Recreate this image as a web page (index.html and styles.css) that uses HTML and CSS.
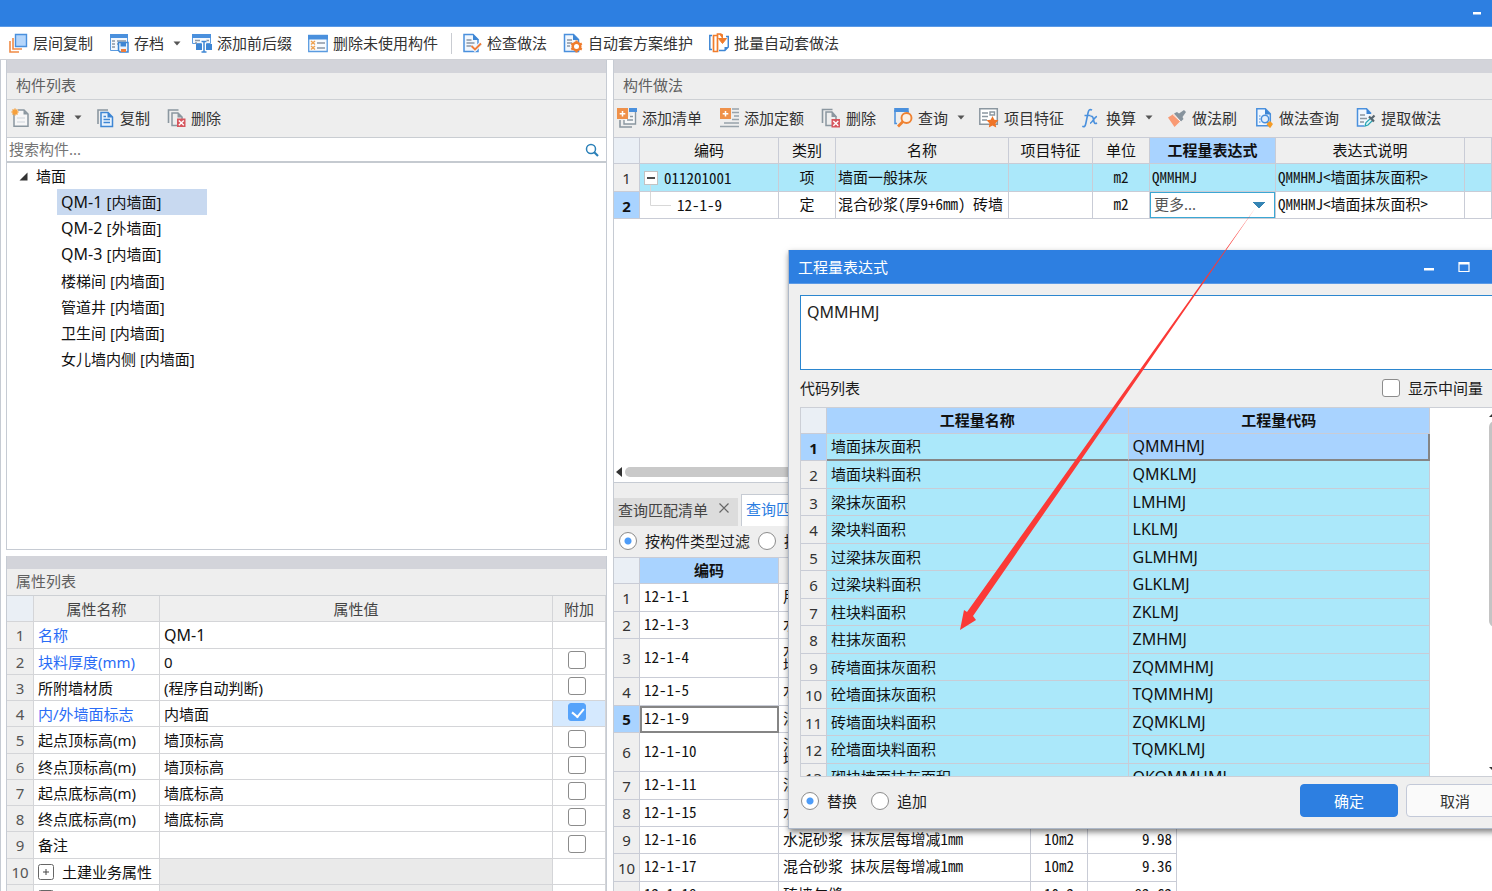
FILE: index.html
```html
<!DOCTYPE html>
<html lang="zh-CN">
<head>
<meta charset="utf-8">
<title>构件做法</title>
<link rel="stylesheet" href="styles.css">
</head>
<body>
<div class="app">
  <header class="titlebar">
    <button class="win-btn" aria-label="最小化"><svg width="10" height="10" viewBox="0 0 10 10"><path d="M1 4h8v2.500H1z" fill="#fff"/></svg></button>
  </header>

  <nav class="toolbar main-toolbar">
    <button class="tool"><svg class="icon" viewBox="0 0 20 20"><path d="M2 8v11h9M5 5v11h9" fill="none" stroke="#ef8a45" stroke-width="1.600"/><path d="M7.500 1.500h11v12h-11z" fill="#b5d6fb" stroke="#4a90dd" stroke-width="1.400"/></svg>层间复制</button>
    <button class="tool has-menu"><svg class="icon" viewBox="0 0 20 20"><path d="M1.500 1.500h17v16h-17z" fill="#f4f8fd" stroke="#5a9be0"/><path d="M1 1h18v4H1z" fill="#4a90dd"/><path d="M3 8h3M3 11h3M3 14h3M8 8h9M8 11h2" stroke="#8b97a5" stroke-width="1.400"/><path d="M9.500 9.500h9.500v9.500H11l-1.500-1.500z" fill="#eaf3fd" stroke="#3e86d4" stroke-width="1.500"/><path d="M11.500 10h5.500v3.500h-5.500z" fill="#3e86d4"/><path d="M12 16h5v3h-5z" fill="#ef7d3a"/></svg>存档<svg class="caret" viewBox="0 0 8 5"><path d="M0.500 0.500h7L4 4.500z"/></svg></button>
    <button class="tool"><svg class="icon" viewBox="0 0 20 20"><path d="M.500 1.500h18v9h-18z" fill="#f4f8fd" stroke="#5a9be0"/><path d="M0 1h19v4H0z" fill="#4a90dd"/><path d="M3 7.500h5M3 10h2M14 7.500h3" stroke="#8b97a5" stroke-width="1.400"/><path d="M9.500 8.500h5M12 8v11M9.500 19h5" stroke="#fff" stroke-width="4"/><path d="M4 11h6v6H4zM14 11h6v6h-6z" fill="#3e86d4"/><path d="M9.500 8.500h5M12 8v11M9.500 19h5" stroke="#3e86d4" stroke-width="1.500"/></svg>添加前后缀</button>
    <button class="tool"><svg class="icon" viewBox="0 0 20 20"><path d="M.700 2.500h18.500v16H.700z" fill="#f8fbff" stroke="#5a9be0" stroke-width="1.300"/><path d="M0 2h20v4.500H0z" fill="#4a90dd"/><path d="M3 8l4 3.500M7 8l-4 3.500M3 13l4 3.500M7 13l-4 3.500" stroke="#efa04d" stroke-width="1.400"/><path d="M9 10h8M9 15h8" stroke="#8b97a5" stroke-width="1.600"/></svg>删除未使用构件</button>
    <span class="divider"></span>
    <button class="tool"><svg class="icon" viewBox="0 0 20 20"><path d="M2 1.500h9l5 5v12H2z" fill="#f1f7fe" stroke="#4a90dd" stroke-width="1.500"/><path d="M11 1v6h6z" fill="#3e86d4"/><path d="M4.500 7h5M4.500 10h8M4.500 13h5" stroke="#8b97a5" stroke-width="1.400"/><path d="M9.500 13l3.500 3.500 6-6" fill="none" stroke="#f1f7fe" stroke-width="4"/><path d="M9.500 13l3.500 3.500 6-6" fill="none" stroke="#ef7d3a" stroke-width="1.900"/></svg>检查做法</button>
    <button class="tool"><svg class="icon" viewBox="0 0 20 20"><path d="M1.500 1.500h9l5 5v12h-14z" fill="#f1f7fe" stroke="#4a90dd" stroke-width="1.500"/><path d="M10 1v6h6z" fill="#3e86d4"/><path d="M4 7h5M4 10h5M4 13h3" stroke="#8b97a5" stroke-width="1.400"/><circle cx="13.500" cy="13.500" r="3.800" fill="#fff" stroke="#f07c2c" stroke-width="2.600"/><path d="M13.500 7.500v2.500M13.500 17v2.500M8.300 10.500l2.200 1.200M16.600 15.300l2.200 1.200M8.300 16.500l2.200-1.200M16.600 11.700l2.200-1.200" stroke="#f07c2c" stroke-width="2.200"/></svg>自动套方案维护</button>
    <button class="tool"><svg class="icon" viewBox="0 0 20 20"><path d="M3 2.500H.800v14H3M17 3.500h2.300V14l-3.500 3.500H10" fill="none" stroke="#3e86d4" stroke-width="1.500"/><path d="M15.500 18v-4h4z" fill="#3e86d4"/><path d="M4.500 2.500h4v16h-4zM8.500 3V1h4" fill="none" stroke="#f07c2c" stroke-width="1.700"/><path d="M10.500 1.500h3v4.500M9.500 5.500h8l-4 5z" fill="#f07c2c" stroke="#f07c2c"/></svg>批量自动套做法</button>
  </nav>

  <main class="workspace">
    <div class="left-column">
      <section class="panel components">
        <h2 class="panel-title">构件列表</h2>
        <div class="toolbar panel-toolbar">
          <button class="tool has-menu"><svg class="icon" viewBox="0 0 20 20"><path d="M4 4v14.200h14V6l-4-4H8" fill="#f7f7f8" stroke="#8b97a0" stroke-width="1.500"/><path d="M13.500 2v4.500H18z" fill="#8b97a0"/><path d="M7 10h8M7 14h8" stroke="#dcdfe3" stroke-width="1.300"/><path d="M5 .500v7M1.500 4h7M2.500 1.500l5 5M7.500 1.500l-5 5" stroke="#f6a03b" stroke-width="1.500"/></svg>新建<svg class="caret" viewBox="0 0 8 5"><path d="M0.500 0.500h7L4 4.500z"/></svg></button>
          <button class="tool"><svg class="icon" viewBox="0 0 20 20"><path d="M3 16V2h10" fill="none" stroke="#8b97a0" stroke-width="1.600"/><path d="M6 4.500h7l4.500 4.500v9.500H6z" fill="#e8f2fd" stroke="#3e86d4" stroke-width="1.500"/><path d="M12.500 4v5.500H18z" fill="#3e86d4"/><path d="M8.500 8.500H11M8.500 11.500H15M8.500 14.500H15" stroke="#3e86d4" stroke-width="1.300"/></svg>复制</button>
          <button class="tool"><svg class="icon" viewBox="0 0 20 20"><path d="M2.500 15V2h10" fill="none" stroke="#8b97a0" stroke-width="1.600"/><path d="M11 17.500H6V5h6l4 4v2" fill="none" stroke="#8b97a0" stroke-width="1.500"/><path d="M11.500 4.500v5H17z" fill="#8b97a0"/><path d="M11 10.500h8.500V19H11z" fill="#d6555d"/><path d="M12.800 12.500l5 4.800M17.800 12.500l-5 4.800" stroke="#fff" stroke-width="1.400"/></svg>删除</button>
        </div>
        <div class="search">
          <input type="text" placeholder="搜索构件..." aria-label="搜索构件">
          <svg class="search-icon" viewBox="0 0 14 14"><circle cx="6" cy="6" r="4.500" fill="none" stroke="#2b80b8" stroke-width="1.500"/><path d="M9 9l4 4" stroke="#2b80b8" stroke-width="2.200"/></svg>
        </div>
        <ul class="tree">
          <li class="root"><svg class="expander" viewBox="0 0 9 9"><path d="M8.500 .500v8h-8z" fill="#333"/></svg>墙面</li>
          <li><span class="node selected"><span class="latin">QM-1 </span>[内墙面]</span></li>
          <li><span class="node"><span class="latin">QM-2 </span>[外墙面]</span></li>
          <li><span class="node"><span class="latin">QM-3 </span>[内墙面]</span></li>
          <li><span class="node">楼梯间 [内墙面]</span></li>
          <li><span class="node">管道井 [内墙面]</span></li>
          <li><span class="node">卫生间 [内墙面]</span></li>
          <li><span class="node">女儿墙内侧 [内墙面]</span></li>
        </ul>
      </section>

      <section class="panel properties">
        <h2 class="panel-title">属性列表</h2>
        <table class="grid prop-grid">
          <colgroup><col class="w-num"><col class="w-prop"><col><col class="w-extra"></colgroup>
          <thead><tr><th class="corner"></th><th>属性名称</th><th>属性值</th><th>附加</th></tr></thead>
          <tbody>
            <tr><th>1</th><td class="link">名称</td><td><span class="latin">QM-1</span></td><td></td></tr>
            <tr><th>2</th><td class="link">块料厚度(mm)</td><td>0</td><td class="tick"><input type="checkbox" aria-label="块料厚度附加"></td></tr>
            <tr><th>3</th><td>所附墙材质</td><td>(程序自动判断)</td><td class="tick"><input type="checkbox" aria-label="所附墙材质附加"></td></tr>
            <tr><th>4</th><td class="link">内/外墙面标志</td><td>内墙面</td><td class="tick active"><input type="checkbox" checked aria-label="内外墙面标志附加"></td></tr>
            <tr><th>5</th><td>起点顶标高(m)</td><td>墙顶标高</td><td class="tick"><input type="checkbox" aria-label="起点顶标高附加"></td></tr>
            <tr><th>6</th><td>终点顶标高(m)</td><td>墙顶标高</td><td class="tick"><input type="checkbox" aria-label="终点顶标高附加"></td></tr>
            <tr><th>7</th><td>起点底标高(m)</td><td>墙底标高</td><td class="tick"><input type="checkbox" aria-label="起点底标高附加"></td></tr>
            <tr><th>8</th><td>终点底标高(m)</td><td>墙底标高</td><td class="tick"><input type="checkbox" aria-label="终点底标高附加"></td></tr>
            <tr><th>9</th><td>备注</td><td></td><td class="tick"><input type="checkbox" aria-label="备注附加"></td></tr>
            <tr><th>10</th><td class="group"><svg class="plus" viewBox="0 0 16 16"><rect x=".500" y=".500" width="15" height="15" rx="2" fill="#fff" stroke="#666"/><path d="M5 8h6M8 5v6" stroke="#444"/></svg>土建业务属性</td><td class="shade"></td><td></td></tr>
            <tr><th></th><td class="group"><svg class="plus" viewBox="0 0 16 16"><rect x=".500" y=".500" width="15" height="15" rx="2" fill="#fff" stroke="#666"/><path d="M5 8h6M8 5v6" stroke="#444"/></svg></td><td class="shade"></td><td></td></tr>
          </tbody>
        </table>
      </section>
    </div>

    <div class="right-column">
      <section class="panel methods">
        <h2 class="panel-title">构件做法</h2>
        <div class="toolbar panel-toolbar right-tools">
          <button class="tool"><svg class="icon" viewBox="0 0 20 20"><path d="M12 0h8v4h-8z" fill="#4a90dd"/><path d="M18.500 4v12H7v-4" fill="#f7f8f9" stroke="#8b97a0" stroke-width="1.400"/><path d="M3 12v7h12M10 12h6M13 8.500h3" fill="none" stroke="#8b97a0" stroke-width="1.600"/><path d="M0 0h11v11H0z" fill="#ef914a"/><path d="M5.500 3v5.500M2.700 5.700h5.600" stroke="#fff" stroke-width="1.500"/></svg>添加清单</button>
          <button class="tool"><svg class="icon" viewBox="0 0 20 20"><path d="M13 1h7M13 4.500h7M15 8h5M13 11.500h7M5 15h15M1 18.500h19" stroke="#98a2aa" stroke-width="1.700"/><path d="M1 0h11v11H1z" fill="#ef914a"/><path d="M6.500 3v5.500M3.700 5.700h5.600" stroke="#fff" stroke-width="1.500"/></svg>添加定额</button>
          <button class="tool"><svg class="icon" viewBox="0 0 20 20"><path d="M1.500 15V1.500h10" fill="none" stroke="#8b97a0" stroke-width="1.600"/><path d="M11 17.500H5V4h6l4 4.500v3" fill="none" stroke="#8b97a0" stroke-width="1.500"/><path d="M10.500 3.500V9H16z" fill="#8b97a0"/><path d="M10.500 11h8.500v8.500h-8.500z" fill="#d6555d"/><path d="M12.300 13l5 4.800M17.300 13l-5 4.800" stroke="#fff" stroke-width="1.400"/></svg>删除</button>
          <button class="tool has-menu"><svg class="icon" viewBox="0 0 20 20"><path d="M2 2v13.500h2M15 3v2" fill="none" stroke="#4a90dd" stroke-width="1.500"/><path d="M1.200 0h14.500v4H1.200z" fill="#4a90dd"/><circle cx="13.500" cy="10" r="5" fill="#fdf0e4" stroke="#ef8232" stroke-width="1.900"/><path d="M10 13.500l-5 5" stroke="#ef8232" stroke-width="2.800"/></svg>查询<svg class="caret" viewBox="0 0 8 5"><path d="M0.500 0.500h7L4 4.500z"/></svg></button>
          <button class="tool"><svg class="icon" viewBox="0 0 20 20"><path d="M.800.800h17.500v15.500H.800z" fill="#fff" stroke="#8b97a0" stroke-width="1.500"/><path d="M3 5h6M3 8.500h6M3 12h5M11 4h4.500v3H11z" fill="none" stroke="#8b97a0" stroke-width="1.400"/><path d="M13.500 8l1.800 3.700 4.200.6-3 2.900.7 4.300-3.700-2-3.700 2 .7-4.300-3-2.900 4.200-.6z" fill="#ef7428"/></svg>项目特征</button>
          <button class="tool has-menu"><svg class="icon" viewBox="0 0 20 20"><path d="M11 2.200C8.500.500 7.500 2.500 7 5L4.800 15.500C4.300 18.300 3.200 19.300 1.300 18.300M3.500 7.500h6M9.500 8.500c2.500-1 2.800 2 3.200 4 .5 2.500 1 3.800 3.300 2.500M16 8.500c-2.500.300-5 6.700-7 6.700" fill="none" stroke="#4a90dd" stroke-width="1.600"/></svg>换算<svg class="caret" viewBox="0 0 8 5"><path d="M0.500 0.500h7L4 4.500z"/></svg></button>
          <button class="tool"><svg class="icon" viewBox="0 0 20 20"><path d="M1 9.500l5.500-3.500 7 7L7.500 19z" fill="#f99a74"/><path d="M7 5.500l3-1.500 2 1.500L17 2l2 2-3.500 5 1 2-2.500 2.500z" fill="#87939d"/><path d="M6 6.500l7.500 7" stroke="#fff" stroke-width="1"/></svg>做法刷</button>
          <button class="tool"><svg class="icon" viewBox="0 0 20 20"><path d="M2.800.800h8.500l5 5v12H2.800z" fill="#f1f7fe" stroke="#4a90dd" stroke-width="1.500"/><path d="M11 .500v6h6z" fill="#3e86d4"/><path d="M5 8h1.500M5 11h1.500M5 14h1.500" stroke="#4a90dd"/><circle cx="11" cy="11" r="3.700" fill="#e4effc" stroke="#4a90dd" stroke-width="1.500"/><path d="M13 13.500l2 2" stroke="#4a90dd" stroke-width="1.500"/><path d="M13.500 16l2.500-2 2 2-2 3z" fill="#f59b25" stroke="#f59b25" stroke-width="1.500"/></svg>做法查询</button>
          <button class="tool"><svg class="icon" viewBox="0 0 20 20"><path d="M8 18H1.500V.800h9L15 5.500" fill="#f1f7fe" stroke="#4a90dd" stroke-width="1.500"/><path d="M10.500.500v5.500h5z" fill="#3e86d4"/><path d="M4 7h5M4 10.500h7M4 14h4" stroke="#8b97a0" stroke-width="1.400"/><path d="M9 18l1-3.500 5-4.500 2 2-5 5z" fill="#dff6f8" stroke="#27a4b3" stroke-width="1.200"/><path d="M13 8.500l5 5M15.500 10.500l3-3" stroke="#58656f" stroke-width="2.200"/></svg>提取做法</button>
        </div>
        <div class="method-body">
          <table class="grid method-grid">
            <colgroup><col class="w-rownum"><col class="w-code"><col class="w-kind"><col class="w-name"><col class="w-feature"><col class="w-unit"><col class="w-expr"><col class="w-note"><col></colgroup>
            <thead><tr><th class="corner"></th><th>编码</th><th>类别</th><th>名称</th><th>项目特征</th><th>单位</th><th class="current">工程量表达式</th><th>表达式说明</th><th></th></tr></thead>
            <tbody>
              <tr class="cyan"><th>1</th><td class="outline"><svg class="branch" viewBox="0 0 32 27"><rect x="4.500" y="7.500" width="13" height="13" fill="#fff" stroke="#c3c3c3"/><path d="M7 14h8" stroke="#111" stroke-width="1.500"/><path d="M10.500 21v6" stroke="#d8d8d8"/></svg><span class="parent">011201001</span></td><td class="mid">项</td><td>墙面一般抹灰</td><td></td><td class="mid">m2</td><td>QMMHMJ</td><td>QMMHMJ&lt;墙面抹灰面积&gt;</td><td></td></tr>
              <tr><th class="current">2</th><td class="outline"><svg class="branch" viewBox="0 0 32 27"><path d="M10.500 0v13.500H31" fill="none" stroke="#d8d8d8"/></svg><span class="child">12-1-9</span></td><td class="mid">定</td><td>混合砂浆(厚9+6mm) 砖墙</td><td></td><td class="mid">m2</td><td class="editor"><select aria-label="工程量表达式"><option>更多...</option></select></td><td>QMMHMJ&lt;墙面抹灰面积&gt;</td><td></td></tr>
            </tbody>
          </table>
          <div class="hscroll"><svg class="hscroll-arrow" viewBox="0 0 6 10"><path d="M6 0v10L0 5z" fill="#333"/></svg><span class="hscroll-thumb"></span></div>
        </div>
      </section>

      <section class="panel queries">
        <div class="tabs">
          <button class="tab">查询匹配清单<svg class="close" viewBox="0 0 10 10"><path d="M0.500.500l9 9M9.500.500l-9 9" stroke="#666" stroke-width="1.200"/></svg></button>
          <button class="tab open">查询匹配定额</button>
        </div>
        <div class="filters">
          <label><input type="radio" name="filter" checked>按构件类型过滤</label>
          <label><input type="radio" name="filter">按构件属性过滤</label>
        </div>
        <div class="match-body">
          <table class="grid match-grid">
            <colgroup><col class="w-rownum"><col class="w-code"><col class="w-match"><col class="w-unit"><col class="w-price"></colgroup>
            <thead><tr><th class="corner"></th><th class="current">编码</th><th></th><th></th><th></th></tr></thead>
            <tbody>
              <tr><th>1</th><td>12-1-1</td><td>用</td><td></td><td></td></tr>
              <tr><th>2</th><td>12-1-3</td><td>水</td><td></td><td></td></tr>
              <tr class="tall"><th>3</th><td>12-1-4</td><td>水<br>墙</td><td></td><td></td></tr>
              <tr><th>4</th><td>12-1-5</td><td>水</td><td></td><td></td></tr>
              <tr><th class="current">5</th><td class="focus">12-1-9</td><td>混</td><td></td><td></td></tr>
              <tr class="tall"><th>6</th><td>12-1-10</td><td>混<br>墙</td><td></td><td></td></tr>
              <tr><th>7</th><td>12-1-11</td><td>混</td><td></td><td></td></tr>
              <tr><th>8</th><td>12-1-15</td><td>水</td><td></td><td></td></tr>
              <tr><th>9</th><td>12-1-16</td><td>水泥砂浆 抹灰层每增减1mm</td><td class="mid">10m2</td><td class="num">9.98</td></tr>
              <tr><th>10</th><td>12-1-17</td><td>混合砂浆 抹灰层每增减1mm</td><td class="mid">10m2</td><td class="num">9.36</td></tr>
              <tr><th>11</th><td>12-1-18</td><td>砖墙勾缝</td><td class="mid">10m2</td><td class="num">82.62</td></tr>
            </tbody>
          </table>
        </div>
      </section>
    </div>
  </main>

  <section class="dialog" role="dialog" aria-labelledby="dialog-title">
    <header class="dialog-head">
      <h2 id="dialog-title">工程量表达式</h2>
      <button class="win-btn" aria-label="最小化"><svg width="12" height="12" viewBox="0 0 12 12"><path d="M1 7h10v2.500H1z" fill="#fff"/></svg></button>
      <button class="win-btn" aria-label="最大化"><svg width="12" height="12" viewBox="0 0 12 12"><path d="M1 1.500h10v9H1z" fill="none" stroke="#fff" stroke-width="1.200"/><path d="M1 1h10v2.500H1z" fill="#fff"/></svg></button>
      <button class="win-btn" aria-label="关闭"><svg width="12" height="12" viewBox="0 0 12 12"><path d="M1 1l10 10M11 1L1 11" stroke="#fff" stroke-width="1.500"/></svg></button>
    </header>
    <div class="dialog-body">
      <textarea class="expression" aria-label="表达式">QMMHMJ</textarea>
      <div class="list-head">
        <span>代码列表</span>
        <label><input type="checkbox">显示中间量</label>
      </div>
      <div class="code-list">
        <div class="code-scroll">
          <table class="grid code-grid">
            <colgroup><col class="w-rownum"><col class="w-quantity"><col class="w-quantity"></colgroup>
            <thead><tr><th class="corner"></th><th class="current">工程量名称</th><th class="current">工程量代码</th></tr></thead>
            <tbody>
              <tr class="picked"><th class="current">1</th><td>墙面抹灰面积</td><td>QMMHMJ</td></tr>
              <tr><th>2</th><td>墙面块料面积</td><td>QMKLMJ</td></tr>
              <tr><th>3</th><td>梁抹灰面积</td><td>LMHMJ</td></tr>
              <tr><th>4</th><td>梁块料面积</td><td>LKLMJ</td></tr>
              <tr><th>5</th><td>过梁抹灰面积</td><td>GLMHMJ</td></tr>
              <tr><th>6</th><td>过梁块料面积</td><td>GLKLMJ</td></tr>
              <tr><th>7</th><td>柱块料面积</td><td>ZKLMJ</td></tr>
              <tr><th>8</th><td>柱抹灰面积</td><td>ZMHMJ</td></tr>
              <tr><th>9</th><td>砖墙面抹灰面积</td><td>ZQMMHMJ</td></tr>
              <tr><th>10</th><td>砼墙面抹灰面积</td><td>TQMMHMJ</td></tr>
              <tr><th>11</th><td>砖墙面块料面积</td><td>ZQMKLMJ</td></tr>
              <tr><th>12</th><td>砼墙面块料面积</td><td>TQMKLMJ</td></tr>
              <tr><th>13</th><td>砌块墙面抹灰面积</td><td>QKQMMHMJ</td></tr>
            </tbody>
          </table>
        </div>
        <div class="vscroll">
          <svg viewBox="0 0 12 6"><path d="M6 0l6 6H0z"/></svg>
          <span class="vthumb"></span>
          <svg viewBox="0 0 12 6"><path d="M0 0h12L6 6z"/></svg>
        </div>
      </div>
      <footer class="dialog-foot">
        <label><input type="radio" name="mode" checked>替换</label>
        <label><input type="radio" name="mode">追加</label>
        <button class="btn primary">确定</button>
        <button class="btn">取消</button>
      </footer>
    </div>
  </section>

  <svg class="pointer" width="300" height="428" viewBox="958 205 300 428" aria-hidden="true"><path d="M1256 207L973 616l3 4-16 10 4-20 3 2z" fill="#fb3a37"/></svg>
</div>
</body>
</html>
```

FILE: styles.css
```css
* { box-sizing: border-box; }

body {
  margin: 0;
  font: 15px/20px "Noto Sans", "Noto Sans CJK SC", sans-serif;
  color: #1c1c1c;
}

button, input, select, textarea { font: inherit; color: inherit; margin: 0; }
button { border: 0; background: none; padding: 0; }
h2 { margin: 0; font-size: 15px; font-weight: 400; }
label { display: flex; align-items: center; gap: 8px; }

.app {
  position: relative;
  display: flex;
  flex-direction: column;
  height: 100vh;
  overflow: hidden;
  background: #fff;
}

/* window chrome */
.titlebar {
  display: flex;
  flex: none;
  justify-content: flex-end;
  align-items: center;
  height: 27px;
  padding-right: 10px;
  background: #2d7fe1;
  border-bottom: 1px solid #5b9ae6;
}
.win-btn { display: flex; }

.toolbar { display: flex; align-items: center; gap: 10px; color: #333; }
.main-toolbar {
  flex: none;
  height: 33px;
  padding-left: 8px;
  border-bottom: 1px solid #cfd1d6;
}
.tool {
  display: flex;
  align-items: center;
  gap: 5px;
  padding-right: 6px;
  white-space: nowrap;
}
.tool.has-menu { padding-right: 1px; }
.panel-toolbar .has-menu { padding-right: 3px; }
.icon { width: 20px; height: 20px; }
.caret { width: 8px; height: 5px; margin-left: 4px; fill: #555; }
.divider { width: 1px; height: 21px; margin-left: -3px; background: #c9ccd2; }

/* docking area */
.workspace {
  display: flex;
  flex: 1;
  min-height: 0;
  gap: 6px;
  padding-left: 5px;
  border-left: 1px solid #c6cbd3;
}
.left-column {
  display: flex;
  flex: 0 0 601px;
  flex-direction: column;
  gap: 6px;
}
.right-column {
  display: flex;
  flex: 1;
  flex-direction: column;
  min-width: 0;
  background: #eee;
}
.panel {
  display: flex;
  flex-direction: column;
  min-height: 0;
  border: 1px solid #c6cbd3;
  border-top: 0;
}
.panel-title {
  flex: none;
  height: 40px;
  padding: 2px 0 0 9px;
  color: #606060;
  background: #eee;
  border-top: 13px solid #d3d4da;
  border-bottom: 1px solid #cdd0d4;
}
.panel-toolbar {
  flex: none;
  height: 37px;
  padding: 0 0 2px 3px;
  background: #eee;
}
.components { flex: 490; background: #fff; }
.properties { flex: 335; background: #fff; border-bottom: 0; }

.search {
  display: flex;
  flex: none;
  align-items: center;
  height: 26px;
  padding-right: 7px;
  border-top: 1px solid #c9cdd2;
  border-bottom: 2px solid #c5cad0;
}
.search input {
  flex: 1;
  height: 22px;
  padding: 0 2px 2px;
  border: 0;
  outline: 0;
}
.search input::placeholder { color: #757575; }
.search-icon { width: 14px; height: 14px; }

.tree { margin: 0; padding: 0; list-style: none; color: #111; }
.tree li { height: 26px; padding-left: 50px; }
.tree li:nth-child(4n) { height: 27px; }
.tree .root { display: flex; align-items: center; gap: 8px; padding-left: 12px; }
.expander { width: 9px; height: 9px; }
.node { display: inline-block; height: 26px; padding: 3px 4px; }
.node.selected { width: 150px; background: #c8d9f0; }
.latin { font-size: 16px; }

/* data grids */
.grid {
  width: 100%;
  table-layout: fixed;
  border-collapse: separate;
  border-spacing: 0;
  color: #111;
}
.grid th, .grid td {
  padding: 0 0 0 3px;
  overflow: hidden;
  white-space: nowrap;
  text-align: left;
  border-right: 1px solid #c9ccd6;
  border-bottom: 1px solid #c9ccd6;
}
.grid th {
  padding: 0 0 1px;
  font-weight: 400;
  text-align: center;
  background: #efefef;
}
.grid tbody th { padding: 1px 0 0; color: #333; }
.grid .corner { background: #eaeff5; }
.grid th.current { font-weight: 700; color: #111; background: #a9d3ff; }
.grid .mid { text-align: center; padding-left: 0; }
.grid .num { text-align: right; padding-right: 4px; }

.w-num { width: 27px; }
.w-prop { width: 126px; }
.w-extra { width: 53px; }
.w-rownum { width: 26px; }
.w-code { width: 139px; }
.w-kind { width: 57px; }
.w-name { width: 173px; }
.w-feature { width: 84px; }
.w-unit { width: 57px; }
.w-expr { width: 126px; }
.w-note { width: 189px; }
.w-match { width: 252px; }
.w-price { width: 89px; }
.w-quantity { width: 301px; }

.prop-grid th, .prop-grid td { height: 26px; border-color: #d4d5d8; }
.prop-grid thead th { color: #444; padding-top: 2px; }
.prop-grid tbody th { padding: 0; color: #555; }
.prop-grid tbody tr:nth-child(4n+1) td { height: 27px; }
.prop-grid td { padding-left: 4px; }
.prop-grid .link { color: #2a6cf6; }
.prop-grid .tick { padding: 0 4px 3px 0; text-align: center; }
.prop-grid .active { background: #d5e9fe; }
.prop-grid .shade { background: #eaeaea; }
.plus { width: 16px; height: 16px; margin-right: 8px; vertical-align: -2px; }

.method-grid td, .match-grid td {
  padding-bottom: 2px;
  font-family: "Noto Sans CJK SC", sans-serif;
  font-feature-settings: "hwid";
}
.methods { flex: 422; background: #fff; border-right: 0; }
.right-tools { gap: 11px; }
.method-body {
  display: flex;
  flex: 1;
  flex-direction: column;
  justify-content: space-between;
  border-top: 1px solid #c9ccd6;
}
.method-grid th { height: 26px; }
.method-grid td { height: 27px; padding-left: 2px; }
.method-grid .cyan td { height: 28px; background: #abe8fa; }
.branch { width: 32px; height: 27px; }
.method-grid .outline { padding: 0; line-height: 16px; }
.method-grid .outline svg { margin: -1px 0; }
.outline svg, .outline span { vertical-align: middle; }
.outline .parent { margin-left: -8px; }
.outline .child { margin-left: 5px; }
.method-grid .editor { padding: 0; }
.editor select {
  display: block;
  width: 100%;
  height: 26px;
  padding: 0 3px 2px;
  font-family: "Noto Sans", "Noto Sans CJK SC", sans-serif;
  color: #555;
  border: 1px solid #3ba7d4;
  border-radius: 0;
  appearance: none;
  background: linear-gradient(to bottom right, #3584b4 50%, transparent 51%) right 9px center / 6px 6px no-repeat,
    linear-gradient(to bottom left, #3584b4 50%, transparent 51%) right 15px center / 6px 6px no-repeat, #fff;
}

.hscroll { display: flex; align-items: center; gap: 3px; height: 19px; padding-left: 2px; }
.hscroll-arrow { width: 6px; height: 10px; }
.hscroll-thumb { flex: 1; height: 10px; border-radius: 5px; background: #c9c9c9; }

.queries { flex: 409; border-right: 0; border-bottom: 0; }
.tabs { display: flex; flex: none; align-items: flex-end; gap: 3px; height: 43px; }
.tab {
  display: flex;
  gap: 11px;
  height: 28px;
  padding: 2px 9px 0 4px;
  color: #444;
  background: #dcdcdc;
}
.tab.open {
  height: 32px;
  padding-top: 4px;
  color: #2a7de1;
  background: #fff;
  border: 1px solid #c6cbd3;
  border-bottom: 0;
}
.close { width: 10px; height: 10px; margin-top: 3px; }
.filters {
  display: flex;
  flex: none;
  align-items: center;
  gap: 8px;
  height: 31px;
  padding-left: 5px;
}
.match-body { flex: 1; overflow: hidden; background: #fff; border-top: 1px solid #c9ccd6; }
.match-grid { width: 563px; }
.match-grid thead th { height: 26px; }
.match-grid td { height: 27px; padding-left: 4px; line-height: 16px; }
.match-grid tbody tr:nth-child(3n+1) td { height: 28px; }
.match-grid tbody .tall td { height: 39px; line-height: 15px; }
.match-grid .focus { border: 2px solid #858585; padding-left: 2px; }

/* form controls */
input[type="checkbox"], input[type="radio"] {
  flex: none;
  width: 18px;
  height: 18px;
  background: #fff;
  border: 1px solid #8c8c8c;
  border-radius: 3px;
  appearance: none;
  vertical-align: -3px;
}
input[type="checkbox"]:checked {
  position: relative;
  background: #55a3fb;
  border-color: #55a3fb;
}
input[type="checkbox"]:checked::after {
  content: "";
  position: absolute;
  left: 5px;
  top: 2px;
  width: 6px;
  height: 9px;
  border: solid #fff;
  border-width: 0 2px 2px 0;
  rotate: 40deg;
}
input[type="radio"] { border-radius: 50%; }
input[type="radio"]:checked {
  background: radial-gradient(circle, #4d9cf8 0 3px, #fff 4px);
}

/* quantity expression window */
.dialog {
  position: absolute;
  left: 788px;
  top: 250px;
  width: 728px;
  background: #efefef;
  border: solid #aeb9c9;
  border-width: 0 1px 1px;
  box-shadow: 1px 3px 6px rgba(0, 0, 0, .5);
}
.dialog-head {
  display: flex;
  align-items: center;
  gap: 23px;
  height: 34px;
  padding: 0 10px 0 9px;
  color: #fff;
  background: #2d7fe1;
  border-bottom: 1px solid #5b9ae6;
}
.dialog-head h2 { flex: 1; }
.dialog-body { padding: 11px 11px 0; }
.expression {
  display: block;
  width: 100%;
  height: 75px;
  padding: 6px;
  font-size: 16px;
  color: #222;
  border: 1px solid #2b86cf;
  outline: 0;
  resize: none;
  background: #fff;
}
.list-head {
  display: flex;
  justify-content: space-between;
  align-items: center;
  height: 37px;
  padding: 0 21px 2px 0;
}
.code-list {
  display: flex;
  height: 370px;
  background: #fff;
  border: 1px solid #cccfd6;
}
.code-scroll { flex: 1; overflow: hidden; }
.code-grid { width: 629px; }
.code-grid thead th { height: 26px; padding-bottom: 2px; }
.code-grid td { height: 27px; padding: 0 0 1px 4px; background: #abe8fa; }
.code-grid tbody tr:nth-child(even) td { height: 28px; }
.code-grid td:last-child { font-size: 16px; }
.code-grid .picked td { border-bottom: 2px solid #858585; }
.code-grid .picked td:last-child { background: #a9d3ff; border-right: 2px solid #858585; }
.vscroll {
  display: flex;
  flex-direction: column;
  align-items: center;
  width: 16px;
  padding: 3px 0;
}
.vscroll svg { width: 12px; height: 6px; fill: #333; }
.vthumb { width: 12px; height: 206px; margin: 4px 0 auto; border-radius: 6px; background: #c4c4c4; }
.dialog-foot {
  display: flex;
  align-items: center;
  gap: 14px;
  height: 51px;
  padding-bottom: 4px;
}
.dialog-foot label:first-child { padding-left: 1px; }
.btn {
  width: 98px;
  height: 33px;
  color: #333;
  background: #fafafa;
  border: 1px solid #c3c9d8;
  border-radius: 4px;
}
.btn.primary { margin: 0 -6px 0 auto; color: #fff; background: #2d7fe1; border-color: #2d7fe1; }

/* callout from the drop-down to the code list */
.pointer {
  position: absolute;
  left: 958px;
  top: 205px;
  pointer-events: none;
}
```
